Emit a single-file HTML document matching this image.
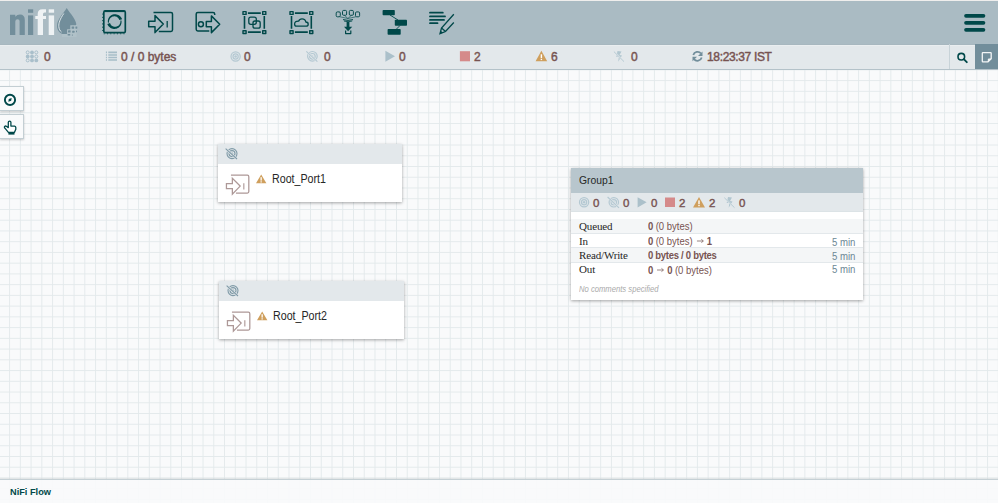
<!DOCTYPE html>
<html><head><meta charset="utf-8">
<style>
*{margin:0;padding:0;box-sizing:border-box}
html,body{width:998px;height:503px;overflow:hidden;background:#f9fafb;font-family:"Liberation Sans",sans-serif}
.abs{position:absolute}
#header{position:absolute;left:0;top:0;width:998px;height:45px;background:#aabbc3;border-top:1px solid #efeeed;border-bottom:1px solid #a7b7bf}
#status{position:absolute;left:0;top:45px;width:998px;height:25px;background:#e3e8eb;border-top:1px solid #eaeef0;border-bottom:1px solid #b4c2c9;box-shadow:0 1px 1px rgba(0,0,0,0.07)}
#canvas{position:absolute;left:0;top:70px;width:998px;height:433px;overflow:hidden}
#footer{position:absolute;left:0;top:479px;width:998px;height:24px;background:rgba(249,250,251,0.93);border-top:1px solid #c5d0d5;box-shadow:0 -1px 1px rgba(0,0,0,0.05)}
.sv{position:absolute;top:4px;font-size:12px;font-weight:normal;-webkit-text-stroke:0.45px #775351;color:#775351;line-height:15px;letter-spacing:0}
.comp{position:absolute;background:#fff;box-shadow:0 1px 3px rgba(0,0,0,0.35)}
.phdr{position:absolute;left:0;top:0;right:0;height:20px;background:#e3e8eb}
.pname{position:absolute;font-size:12px;color:#262626;line-height:14px;transform:scaleX(0.89);transform-origin:0 0;white-space:nowrap}
.row{position:absolute;left:0;width:292px;height:14px;font-size:10px;line-height:14px}
.row span{position:absolute;top:2px;line-height:12px;white-space:nowrap}
.lab{top:1px !important;left:8px;font-family:"Liberation Serif",serif;color:#262626;font-size:11px;letter-spacing:-0.15px}
.val{position:absolute;left:76.5px;color:#775351;font-family:"Liberation Sans",sans-serif;transform:scaleX(0.95);transform-origin:0 0}
.tm{position:absolute;right:8px;color:#6b8794;font-size:10px;transform:scaleX(0.96);transform-origin:100% 0;top:2.5px !important}
.gs{position:absolute;top:28.5px;font-size:11.5px;font-weight:normal;-webkit-text-stroke:0.4px #775351;color:#775351;line-height:12px}
.pal{position:absolute;left:0;width:24px;height:25px;background:#f9fafb;border:1px solid #c3ced3;border-left:0;box-shadow:0 1px 2px rgba(0,0,0,0.2)}
.val b{font-weight:bold;letter-spacing:-0.3px}
</style></head><body>
<div id="header">
<svg width="998" height="44" style="position:absolute;left:0;top:-1px">
 <g fill="#728e9b">
  <path d="M10 14.8 H15.3 V16.8 Q17 14.5 20 14.5 Q24.8 14.5 24.8 20 V35 H19.6 V21 Q19.6 19.2 17.6 19.2 Q15.3 19.2 15.3 21.5 V35 H10 Z"/>
  <rect x="28" y="9.3" width="5.2" height="3.5"/>
  <rect x="28" y="15.4" width="5.2" height="19.6"/>
 </g>
 <g fill="#eef2f4">
  <path d="M37.7 35 V14 Q37.7 9.3 42.5 9.3 H46 V12.5 H44.5 Q43 12.5 43 14 V16.1 H46 V18.9 H43 V35 Z M35.3 16.1 H37.8 V18.9 H35.3 Z"/>
  <rect x="48.7" y="9.3" width="5.4" height="3.4"/>
  <rect x="48.7" y="15.4" width="5.4" height="19.6"/>
 </g>
 <path fill="#728e9b" d="M66.7 8 C63 14 57 19.5 57 26 C57 31.5 61.5 35 66.7 35 C72 35 76.5 31.5 76.5 26 C76.5 19.5 70.5 14 66.7 8 Z"/>
 <path fill="none" stroke="#e9eef0" stroke-width="0.9" d="M63.8 13.5 C60 19 58.6 23 58.8 26.5 C59 29 60 31 61.5 32"/>
 <path fill="#b0c1c8" d="M62 33.9 H67.1 V29.2 H70.3 V25.2 H75.7 L77.5 24 V37 H62 Z"/>
 <path fill="#aabbc3" d="M77.5 22 H80 V37 H76.5 Z"/>
 <g fill="#728e9b">
  <rect x="71.6" y="26.4" width="2.6" height="2.3" rx="0.4"/><rect x="75.4" y="26.4" width="1.9" height="2.3" rx="0.4"/>
  <rect x="68" y="30.3" width="2.6" height="2.3" rx="0.4"/><rect x="72.2" y="30.8" width="2.3" height="2" rx="0.4"/><rect x="76" y="30.6" width="1" height="1.6"/>
  <rect x="67.6" y="34.1" width="2.7" height="1.3" rx="0.3"/><rect x="71.9" y="34.6" width="1" height="1"/>
 </g>
 <g fill="none" stroke="#004849" stroke-width="1.8" stroke-linejoin="round">
  <!-- processor -->
  <rect x="103.8" y="10.9" width="21.5" height="21.8" rx="1.5" stroke-width="1.7"/>
  <path d="M104.6 11.1 H124.4" stroke-width="2"/>
 </g>
 <g fill="#004849">
  <path d="M108.00 22.78 L107.87 21.94 L107.84 21.08 L107.92 20.22 L108.11 19.37 L108.40 18.55 L108.80 17.77 L109.29 17.04 L109.88 16.37 L110.54 15.77 L111.28 15.27 L112.09 14.85 L112.94 14.54 L113.83 14.34 L114.74 14.25 L115.67 14.27 L116.58 14.41 L117.48 14.66 L118.34 15.03 L119.16 15.50 L119.91 16.08 L120.59 16.75 L121.18 17.50 L121.68 18.32 L122.07 19.21 L119.31 20.10 L119.13 19.52 L118.86 18.96 L118.53 18.44 L118.14 17.96 L117.68 17.52 L117.17 17.15 L116.61 16.84 L116.01 16.60 L115.38 16.44 L114.73 16.35 L114.07 16.35 L113.41 16.43 L112.76 16.60 L112.14 16.84 L111.54 17.17 L110.98 17.57 L110.48 18.04 L110.03 18.57 L109.66 19.16 L109.36 19.79 L109.13 20.47 L109.00 21.17 L108.95 21.88 L108.99 22.61 Z"/>
  <path d="M121.40 20.42 L121.53 21.26 L121.56 22.12 L121.48 22.98 L121.29 23.83 L121.00 24.65 L120.60 25.43 L120.11 26.16 L119.52 26.83 L118.86 27.43 L118.12 27.93 L117.31 28.35 L116.46 28.66 L115.57 28.86 L114.66 28.95 L113.73 28.93 L112.82 28.79 L111.92 28.54 L111.06 28.17 L110.24 27.70 L109.49 27.12 L108.81 26.45 L108.22 25.70 L107.72 24.88 L107.33 23.99 L110.09 23.10 L110.27 23.68 L110.54 24.24 L110.87 24.76 L111.26 25.24 L111.72 25.68 L112.23 26.05 L112.79 26.36 L113.39 26.60 L114.02 26.76 L114.67 26.85 L115.33 26.85 L115.99 26.77 L116.64 26.60 L117.26 26.36 L117.86 26.03 L118.42 25.63 L118.92 25.16 L119.37 24.63 L119.74 24.04 L120.04 23.41 L120.27 22.73 L120.40 22.03 L120.45 21.32 L120.41 20.59 Z"/>
  <circle cx="102.75" cy="14.0" r="0.6"/><circle cx="102.75" cy="17.3" r="0.6"/><circle cx="102.75" cy="20.6" r="0.6"/><circle cx="102.75" cy="23.9" r="0.6"/><circle cx="102.75" cy="27.2" r="0.6"/><circle cx="102.75" cy="30.5" r="0.6"/><circle cx="104.2" cy="33.75" r="0.6"/><circle cx="107.5" cy="33.75" r="0.6"/><circle cx="110.8" cy="33.75" r="0.6"/><circle cx="114.1" cy="33.75" r="0.6"/><circle cx="117.4" cy="33.75" r="0.6"/><circle cx="120.7" cy="33.75" r="0.6"/><circle cx="124" cy="33.75" r="0.6"/>
 </g>
 <g fill="none" stroke="#004849" stroke-width="1.8" stroke-linejoin="round">
  <!-- input port -->
  <g stroke-width="1.5" transform="translate(146,7)">
   <path d="M2.7 14.3 H9 V8.6 L17.3 17 L9 25.6 V19.7 H2.7 Z"/>
   <path d="M7.5 5.4 H25 Q26.5 5.4 26.5 7 V22.8 Q26.5 24.4 25 24.4 H12.8"/>
   <path d="M21.2 14 V20.6" stroke-width="1.3"/>
  </g>
  <!-- output port -->
  <g stroke-width="1.5" transform="translate(192,7)">
   <path d="M22.7 8 V7 Q22.7 5.4 21 5.4 H5.8 Q4.2 5.4 4.2 7 V22.3 Q4.2 23.9 5.8 23.9 H17.3"/>
   <circle cx="8.9" cy="17.3" r="2.5"/>
   <path d="M14.3 14.6 H19.4 V8.9 L27.7 17.3 L19.4 25.6 V19.7 H14.3 Z"/>
  </g>
  <!-- process group -->
  <g transform="translate(239,7)">
   <rect x="4" y="4.6" width="3.1" height="2.8" stroke-width="1.4"/>
   <rect x="23.7" y="4.6" width="3.1" height="2.8" stroke-width="1.4"/>
   <rect x="4" y="23.7" width="3.1" height="2.8" stroke-width="1.4"/>
   <rect x="23.7" y="23.7" width="3.1" height="2.8" stroke-width="1.4"/>
   <path d="M8.9 6.1 H21.8 M8.9 25.1 H21.8 M5.5 8.9 V21.8 M25.3 8.9 V21.8" stroke-width="1.6"/>
   <rect x="9.8" y="10.1" width="7.5" height="7.2" rx="2" stroke-width="1.3"/>
   <rect x="14" y="14" width="7.2" height="7.2" rx="2" stroke-width="1.3"/>
  </g>
  <!-- remote pg -->
  <g transform="translate(286,7)">
   <rect x="4" y="4.6" width="3.1" height="2.8" stroke-width="1.4"/>
   <rect x="23.7" y="4.6" width="3.1" height="2.8" stroke-width="1.4"/>
   <rect x="4" y="23.7" width="3.1" height="2.8" stroke-width="1.4"/>
   <rect x="23.7" y="23.7" width="3.1" height="2.8" stroke-width="1.4"/>
   <path d="M8.9 6.1 H21.8 M8.9 25.1 H21.8 M5.5 8.9 V21.8 M25.3 8.9 V21.8" stroke-width="1.6"/>
   <path d="M10.5 19.2 H20 Q22.2 19.2 22.2 17.2 Q22.2 15 19.8 15 Q19.5 11.8 16 11.8 Q13.5 11.8 12.6 14.2 Q8.6 14 8.6 17 Q8.6 19.2 10.5 19.2 Z" stroke-width="1.3"/>
  </g>
  <!-- funnel -->
  <g transform="translate(333,6)" stroke-width="0.95">
   <rect x="3.2" y="5.9" width="4.1" height="4.9" rx="1.2"/>
   <rect x="9.5" y="4.4" width="4.1" height="4.9" rx="1.2"/>
   <rect x="16.3" y="4.4" width="4.1" height="4.9" rx="1.2"/>
   <rect x="22.5" y="5.9" width="4.1" height="4.9" rx="1.2"/>
   <path d="M7 10.8 L14.9 12.5 M11.5 9.3 L14.9 12.5 M18.3 9.3 L14.9 12.5 M22.8 10.8 L14.9 12.5" stroke-width="0.6"/>
   <path d="M10 13.6 Q15 15.2 20 13.6" stroke-width="1"/>
   <path d="M11 15 Q15 16.4 19.2 15" stroke-width="0.9"/>
   <path d="M12.6 24.4 V27.6 H17.8 V24.4" stroke-width="1.2"/>
  </g>
  <path d="M348 22 V27" stroke-width="2.8"/>
  <path fill="#004849" stroke="none" d="M344 26.8 H352.2 L348.1 31.2 Z"/>
 </g>
 <!-- template -->
 <g fill="#004849">
  <rect x="382.6" y="9.9" width="12.2" height="5.4" rx="0.8"/>
  <rect x="394.8" y="19.8" width="12.2" height="5.9" rx="0.8"/>
  <rect x="387.6" y="28.9" width="13.1" height="5.8" rx="0.8"/>
 </g>
 <path d="M390 15 L398 20 M400 25.5 L396 29.5" stroke="#004849" stroke-width="0.9" fill="none"/>
 <!-- label -->
 <g stroke="#004849" stroke-width="1.8" stroke-linecap="round" fill="none">
  <path d="M430 12.7 H442.8 M430 16.4 H445 M430 19.9 H444 M430 23.2 H437.5"/>
 </g>
 <g stroke="#004849" stroke-width="1.3" fill="none">
  <path d="M453.8 14.2 L441.5 28 L440 33.6 L445.5 31.5 L453.8 22.5"/>
  <path d="M441.5 28 L445.5 31.5"/>
 </g>
 <path fill="#004849" d="M440 33.8 L440.8 30.7 L443 32.8 Z"/>
 <!-- hamburger -->
 <g stroke="#004849" stroke-width="3.7" stroke-linecap="round">
  <path d="M966 15.8 H983.5 M966 22.8 H983.5 M966 29.8 H983.5"/>
 </g>
</svg>
</div>
<div id="status">
<svg width="998" height="26" style="position:absolute;left:0;top:-2px" viewBox="0 44 998 26">
 <g fill="#a9bfcb">
  <circle cx="32" cy="52.4" r="1.9"/><circle cx="27.7" cy="56.5" r="1.9"/><circle cx="32" cy="56.5" r="1.9"/><circle cx="32" cy="60.4" r="1.9"/><circle cx="36.3" cy="60.4" r="1.9"/>
 </g>
 <g fill="none" stroke="#a9bfcb" stroke-width="1">
  <circle cx="27.7" cy="52.4" r="1.5"/><circle cx="36.3" cy="52.4" r="1.5"/><circle cx="36.3" cy="56.5" r="1.5"/><circle cx="27.7" cy="60.4" r="1.5"/>
 </g>
 <g stroke="#a7bdc8" stroke-width="1.6">
  <path d="M105.9 52.4 H107 M108.3 52.4 H117 M105.9 55 H107 M108.3 55 H117 M105.9 57.5 H107 M108.3 57.5 H117 M105.9 60 H107 M108.3 60 H117"/>
 </g>
 <g fill="none" stroke="#b4c8d2" stroke-width="1.2">
  <circle cx="235.6" cy="56.5" r="4.6"/><circle cx="235.6" cy="56.5" r="2.6"/>
 </g>
 <circle cx="235.6" cy="56.5" r="1.3" fill="#b4c8d2"/>
 <g fill="none" stroke="#b4c8d2" stroke-width="1.2">
  <circle cx="312.4" cy="56.3" r="4.8"/><circle cx="312.4" cy="56.3" r="2.8"/>
 </g>
 <circle cx="312.4" cy="56.3" r="1" fill="#b4c8d2"/>
 <path d="M306.3 51.3 L317.4 61.7" stroke="#e3e8eb" stroke-width="2"/>
 <path d="M306.3 51.3 L317.4 61.7" stroke="#b4c8d2" stroke-width="1.1"/>
 <path fill="#abc0ca" d="M385.4 50.8 L395 56.3 L385.4 61.8 Z"/>
 <rect x="459.9" y="51.2" width="10.1" height="10.1" fill="#d58a8a"/>
 <path fill="#cf9f5d" d="M541.4 50.8 L547.2 61.3 H535.6 Z"/>
 <rect x="540.7" y="54.3" width="1.4" height="3.8" fill="#fff"/><rect x="540.7" y="58.8" width="1.4" height="1.3" fill="#fff"/>
 <path fill="#b1c6d0" d="M617.5 50.9 L621.5 51.5 L619.5 55 L622 55.5 L618.2 61.7 L618.8 57 L616.2 56.8 Z"/>
 <path d="M613.9 51.6 L624 61.6" stroke="#e3e8eb" stroke-width="1.6"/>
 <path d="M613.9 51.6 L624 61.6" stroke="#b1c6d0" stroke-width="0.9"/>
 <g fill="none" stroke="#728e9b" stroke-width="1.8">
  <path d="M693.3 55 A4.4 4.4 0 0 1 701 53.5"/>
  <path d="M701.7 57.6 A4.4 4.4 0 0 1 694 59.1"/>
 </g>
 <path fill="#728e9b" d="M702.5 51.5 V56 H698 Z"/>
 <path fill="#728e9b" d="M692.5 61.3 V56.8 H697 Z"/>
 <path d="M949.5 44 V69" stroke="#c8d3d8" stroke-width="1"/>
 <rect x="975" y="44" width="23" height="25" fill="#728e9b"/>
 <g fill="none" stroke="#004849" stroke-width="1.7">
  <circle cx="961.3" cy="56.7" r="3.3" stroke-width="1.6"/>
  <path d="M963.8 59.2 L966.8 62.2" stroke-width="1.9" stroke-linecap="round"/>
 </g>
 <path fill="none" stroke="#f4f6f7" stroke-width="1.3" d="M982.9 52.6 H990.6 Q991.2 52.6 991.2 53.2 V58.8 L988 61.8 H982.9 Q982.3 61.8 982.3 61.2 V53.2 Q982.3 52.6 982.9 52.6 Z"/>
 <path fill="#f4f6f7" d="M991.2 58.6 L987.8 62 V59.8 Q987.8 58.6 989 58.6 Z"/>
</svg>
<div class="sv" style="left:44px">0</div>
<div class="sv" style="left:121px">0 / 0 bytes</div>
<div class="sv" style="left:244px">0</div>
<div class="sv" style="left:324px">0</div>
<div class="sv" style="left:399px">0</div>
<div class="sv" style="left:474px">2</div>
<div class="sv" style="left:551px">6</div>
<div class="sv" style="left:631px">0</div>
<div class="sv" style="left:707px;letter-spacing:-0.35px">18:23:37 IST</div>
</div>
<div id="canvas">
  <svg width="998" height="433" style="position:absolute;left:0;top:0">
    <defs>
      <pattern id="grid" patternUnits="userSpaceOnUse" x="-1.65" y="-0.65" width="10.747" height="10.74">
        <rect x="0" y="0" width="10.747" height="10.74" fill="#f9fafb"/>
        <rect x="0" y="0" width="0.9" height="10.74" fill="#e3e9eb"/>
        <rect x="0" y="0" width="10.747" height="0.9" fill="#e3e9eb"/>
      </pattern>
    </defs>
    <rect width="998" height="433" fill="url(#grid)"/>
  </svg>

<div class="comp" style="left:218px;top:74px;width:184px;height:58px">
 <div class="phdr"></div>
 <svg width="184" height="58" style="position:absolute;left:0;top:0">
  <g fill="none" stroke="#7f9aa7" stroke-width="1.1">
   <circle cx="14" cy="9.6" r="5"/><circle cx="14" cy="9.6" r="3"/>
  </g>
  <circle cx="14" cy="9.6" r="1.2" fill="#7f9aa7"/>
  <path d="M7.6 4.6 L19 15" stroke="#e3e8eb" stroke-width="2.2"/>
  <path d="M7.6 4.6 L19 15" stroke="#7f9aa7" stroke-width="1.1"/>
  <g fill="none" stroke="#ad9897" stroke-width="1.35" transform="translate(5.9,26.1) scale(0.94)">
   <path d="M2.7 14.3 H9 V8.6 L17.3 17 L9 25.6 V19.7 H2.7 Z"/>
   <path d="M7.5 5.4 H25 Q26.5 5.4 26.5 7 V22.8 Q26.5 24.4 25 24.4 H12.8"/>
   <path d="M21.2 14 V20.6" stroke-width="1.2"/>
  </g>
  <path fill="#cf9f5d" d="M43.2 30.4 L48.4 39.3 H38 Z"/>
  <rect x="42.5" y="33.2" width="1.3" height="3.4" fill="#fff"/><rect x="42.5" y="37.3" width="1.3" height="1.2" fill="#fff"/>
 </svg>
 <div class="pname" style="left:53.5px;top:28px">Root_Port1</div>
</div>
<div class="comp" style="left:219px;top:211px;width:185px;height:58px">
 <div class="phdr"></div>
 <svg width="185" height="58" style="position:absolute;left:0;top:0">
  <g fill="none" stroke="#7f9aa7" stroke-width="1.1">
   <circle cx="14" cy="9.6" r="5"/><circle cx="14" cy="9.6" r="3"/>
  </g>
  <circle cx="14" cy="9.6" r="1.2" fill="#7f9aa7"/>
  <path d="M7.6 4.6 L19 15" stroke="#e3e8eb" stroke-width="2.2"/>
  <path d="M7.6 4.6 L19 15" stroke="#7f9aa7" stroke-width="1.1"/>
  <g fill="none" stroke="#ad9897" stroke-width="1.35" transform="translate(5.9,26.1) scale(0.94)">
   <path d="M2.7 14.3 H9 V8.6 L17.3 17 L9 25.6 V19.7 H2.7 Z"/>
   <path d="M7.5 5.4 H25 Q26.5 5.4 26.5 7 V22.8 Q26.5 24.4 25 24.4 H12.8"/>
   <path d="M21.2 14 V20.6" stroke-width="1.2"/>
  </g>
  <path fill="#cf9f5d" d="M43.2 30.4 L48.4 39.3 H38 Z"/>
  <rect x="42.5" y="33.2" width="1.3" height="3.4" fill="#fff"/><rect x="42.5" y="37.3" width="1.3" height="1.2" fill="#fff"/>
 </svg>
 <div class="pname" style="left:53.5px;top:28px">Root_Port2</div>
</div>
<div class="comp" style="left:571px;top:98px;width:292px;height:132px">
 <div class="abs" style="left:0;top:0;width:292px;height:24.5px;background:#b8c6cd"></div>
 <div class="abs" style="left:0;top:24.5px;width:292px;height:19px;background:#e3e8eb;border-bottom:1px solid #dce3e6"></div>
 <div class="abs" style="left:8px;top:5px;font-size:11.5px;color:#262626;line-height:14px;transform:scaleX(0.9);transform-origin:0 0">Group1</div>
 <svg width="292" height="132" style="position:absolute;left:0;top:0">
  <g fill="none" stroke="#b4c8d2" stroke-width="1.25">
   <circle cx="13.1" cy="34.3" r="4.6"/><circle cx="13.1" cy="34.3" r="2.6"/>
  </g>
  <circle cx="13.1" cy="34.3" r="1.2" fill="#b4c8d2"/>
  <g fill="none" stroke="#b4c8d2" stroke-width="1.2">
   <circle cx="42.8" cy="34.3" r="4.7"/><circle cx="42.8" cy="34.3" r="2.7"/>
  </g>
  <circle cx="42.8" cy="34.3" r="1" fill="#b4c8d2"/>
  <path d="M36.6 29 L48 39.8" stroke="#e3e8eb" stroke-width="2"/>
  <path d="M36.6 29 L48 39.8" stroke="#b4c8d2" stroke-width="1.1"/>
  <path fill="#abc0ca" d="M66.6 29.2 L75.6 34.3 L66.6 39.4 Z"/>
  <rect x="94" y="29.5" width="10" height="9.5" fill="#d58a8a"/>
  <path fill="#cf9f5d" d="M128 29 L134 39.4 H122 Z"/>
  <rect x="127.3" y="32.4" width="1.4" height="3.8" fill="#fff"/><rect x="127.3" y="36.9" width="1.4" height="1.3" fill="#fff"/>
  <path fill="#b1c6d0" d="M157 29 L161 29.6 L159 33.1 L161.5 33.6 L157.7 39.8 L158.3 35.1 L155.7 34.9 Z"/>
  <path d="M153.3 29.7 L163.5 39.7" stroke="#e3e8eb" stroke-width="1.6"/>
  <path d="M153.3 29.7 L163.5 39.7" stroke="#b1c6d0" stroke-width="0.9"/>
 </svg>
 <div class="gs" style="left:22px">0</div>
 <div class="gs" style="left:52px">0</div>
 <div class="gs" style="left:80px">0</div>
 <div class="gs" style="left:108px">2</div>
 <div class="gs" style="left:138px">2</div>
 <div class="gs" style="left:168px">0</div>
 <div class="row" style="height:15px;top:51px;background:#f4f6f7;border-bottom:1px solid #e3e8eb"><span class="lab">Queued</span><span class="val"><b>0</b> (0 bytes)</span></div>
 <div class="row" style="top:66px;background:#fff;border-bottom:1px solid #e3e8eb"><span class="lab">In</span><span class="val"><b>0</b> (0 bytes)<svg width="8" height="6" style="display:inline-block;vertical-align:1px;margin:0 3px 0 4px"><path d="M0.5 3 H7" stroke="#8a7270" stroke-width="0.9"/><path d="M5.2 1.4 L7.3 3 L5.2 4.6" fill="none" stroke="#8a7270" stroke-width="0.9"/></svg><b>1</b></span><span class="tm">5 min</span></div>
 <div class="row" style="height:15px;top:80px;background:#f4f6f7;border-bottom:1px solid #e3e8eb"><span class="lab">Read/Write</span><span class="val"><b>0 bytes / 0 bytes</b></span><span class="tm">5 min</span></div>
 <div class="row" style="top:95px;background:#fff"><span class="lab" style="top:0 !important">Out</span><span class="val"><b>0</b><svg width="8" height="6" style="display:inline-block;vertical-align:1px;margin:0 3px 0 4px"><path d="M0.5 3 H7" stroke="#8a7270" stroke-width="0.9"/><path d="M5.2 1.4 L7.3 3 L5.2 4.6" fill="none" stroke="#8a7270" stroke-width="0.9"/></svg><b>0</b> (0 bytes)</span><span class="tm" style="top:1px !important">5 min</span></div>
 <div class="abs" style="left:8px;top:116px;font-size:8.5px;font-style:italic;color:#aaaaaa;line-height:11px;white-space:nowrap;transform:scaleX(0.9);transform-origin:0 0">No comments specified</div>
</div>
<div class="pal" style="top:16px"><svg width="24" height="25" style="position:absolute;left:0;top:0"><circle cx="10" cy="12.9" r="5.1" fill="none" stroke="#004849" stroke-width="1.9"/><path d="M8.3 14.7 L8.8 11.9 L11.7 10.9 L11.2 13.7 Z" fill="#004849"/></svg></div>
<div class="pal" style="top:44px"><svg width="24" height="25" style="position:absolute;left:0;top:0"><path d="M10.9 11 V7.3 Q10.9 6.1 9.6 6.1 Q8.3 6.1 8.3 7.3 V12.6 L6.4 11.3 Q4.8 10.5 4.4 11.9 Q4.3 12.6 4.9 13.2 L8.4 17.3 H14.5 L15.8 14.2 V12.6 Q15.8 11.3 14.6 11.1 Z" fill="#fff" stroke="#004849" stroke-width="1.3" stroke-linejoin="round"/><rect x="8.4" y="17.3" width="6.1" height="2.3" fill="#004849"/></svg></div>
</div>
<div id="footer">
  <div class="abs" style="left:10px;top:6px;font-size:9.5px;font-weight:bold;color:#004849;line-height:12px;transform:scaleX(0.97);transform-origin:0 0">NiFi Flow</div>
</div>
</body></html>
